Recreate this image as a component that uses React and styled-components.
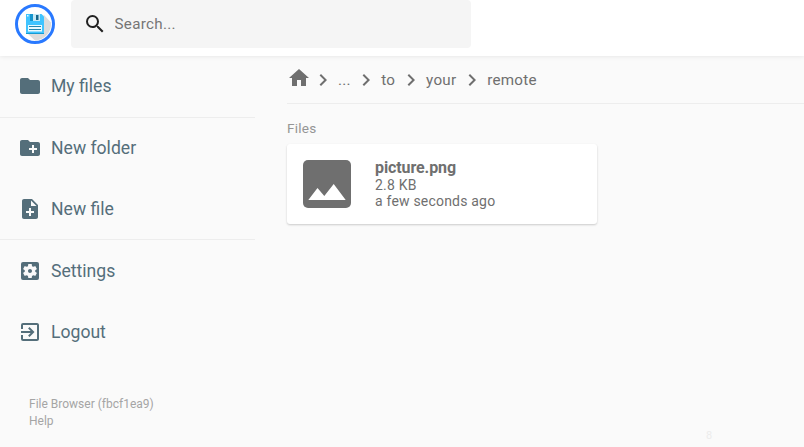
import React from "react";
import styled, { createGlobalStyle } from "styled-components";
import {
  MdSearch, MdHome, MdChevronRight, MdFolder, MdCreateNewFolder,
  MdNoteAdd, MdSettingsApplications, MdExitToApp,
} from "react-icons/md";

const GlobalStyle = createGlobalStyle`
  * { box-sizing: border-box; }
  body {
    margin: 0;
    background: #fafafa;
    color: #6f6f6f;
    font-family: Roboto, sans-serif;
    overflow: hidden;
  }
  svg { display: block; flex: none; }
`;

const Page = styled.div`
  height: 447px;
  display: flex;
  flex-direction: column;
  overflow: hidden;
`;

const Header = styled.header`
  height: 56px;
  flex: none;
  display: flex;
  align-items: flex-start;
  gap: 16px;
  padding-left: 15px;
  background: #fff;
  box-shadow: 0 0 5px rgba(0, 0, 0, 0.1);
  z-index: 1;
`;

const Logo = styled.svg`
  width: 40px;
  height: 40px;
  margin-top: 4px;
`;

const Search = styled.label`
  width: 400px;
  height: 48px;
  display: flex;
  align-items: center;
  gap: 7.5px;
  padding-left: 12px;
  border-radius: 4px;
  background: #f5f5f5;
  color: #212121;
`;

const SearchInput = styled.input`
  flex: 1;
  border: 0;
  outline: 0;
  padding: 0;
  background: transparent;
  font: 15.2px Roboto, sans-serif;
  letter-spacing: 0.3px;
  &::placeholder { color: #757575; }
`;

const Body = styled.div`
  flex: 1;
  display: flex;
`;

const Sidebar = styled.nav`
  width: 255px;
  margin-right: 32px;
`;

const Group = styled.div`
  & + & { border-top: 1px solid rgba(0, 0, 0, 0.05); }
`;

const Action = styled.a`
  height: 60.8px;
  display: flex;
  align-items: center;
  gap: 9.5px;
  padding-left: 17.5px;
  color: #546e7a;
  font-size: 17.6px;
`;

const Credits = styled.footer`
  padding: 34px 0 0 29px;
  color: #a5a5a5;
  font-size: 12px;
  line-height: 17px;
`;

const Main = styled.main`
  flex: 1;
`;

const Breadcrumbs = styled.div`
  height: 48px;
  display: flex;
  align-items: center;
  border-bottom: 1px solid rgba(0, 0, 0, 0.05);
  font-size: 15.2px;
  letter-spacing: 0.25px;
`;

const HomeIcon = styled(MdHome)`
  margin-bottom: 3px;
`;

const Crumb = styled.span`
  width: ${(p) => p.$width}px;
  text-align: center;
  white-space: nowrap;
`;

const SectionTitle = styled.h2`
  margin: 16px 0 8px;
  color: #959595;
  font-size: 13.6px;
  font-weight: 400;
  line-height: 16px;
  letter-spacing: 0.25px;
`;

const Card = styled.article`
  width: 310px;
  height: 80px;
  display: flex;
  align-items: center;
  gap: 24px;
  padding-left: 16px;
  border-radius: 3px;
  background: #fff;
  box-shadow: 0 1px 3px rgba(0, 0, 0, 0.06), 0 1px 2px rgba(0, 0, 0, 0.14);
`;

const FileName = styled.div`
  margin-bottom: 1px;
  font-size: 16px;
  font-weight: 700;
  line-height: 16px;
  letter-spacing: -0.1px;
`;

const FileMeta = styled.div`
  font-size: 14px;
  line-height: 16px;
  letter-spacing: 0.2px;
`;

const Watermark = styled.span`
  position: absolute;
  left: 706px;
  top: 429px;
  color: #ececec;
  font-size: 11px;
  line-height: 13px;
`;

const groups = [
  [["My files", MdFolder]],
  [["New folder", MdCreateNewFolder], ["New file", MdNoteAdd]],
  [["Settings", MdSettingsApplications], ["Logout", MdExitToApp]],
];

const crumbs = [["...", 19], ["to", 20.5], ["your", 37.5], ["remote", 56]];

function DiskLogo() {
  return (
    <Logo viewBox="0 0 40 40">
      <circle cx="20" cy="20" r="18.5" fill="#fff" />
      <path d="M29 11 36 18.5A16.5 16.5 0 0 1 20 36.5L12 29Z" fill="#dcdcdc" />
      <circle cx="20" cy="20" r="18.5" fill="none" stroke="#2979ff" strokeWidth="3" />
      <path d="M11 10h15.5l2.5 2.5V30H11Z" fill="#40c4ff" />
      <path d="M15 10h10v7H15Z" fill="#c7e9f5" />
      <path d="M15 10h3v7h-3Z" fill="#1596cf" />
      <path d="M21 11h2.5v5H21Z" fill="#17658a" />
      <path d="M12 11h1.5v1.5H12Z" fill="#e8f9ff" />
      <path d="M13 21h14v6.5H13Z" fill="#eafaff" />
      <path d="M14 22.5h12M14 25.5h12" stroke="#2486ae" />
      <path d="M11 29h18v1H11Z" fill="#159bd3" />
    </Logo>
  );
}

function PictureIcon() {
  return (
    <svg width="48" height="48" viewBox="0 0 48 48">
      <rect width="48" height="48" rx="5" fill="#6f6f6f" />
      <path d="M5.3 40 14.5 28 21.3 36 30.7 24 42.7 40Z" fill="#fff" />
    </svg>
  );
}

export default function App() {
  return (
    <Page>
      <GlobalStyle />
      <Header>
        <DiskLogo />
        <Search>
          <MdSearch size={24} />
          <SearchInput placeholder="Search..." />
        </Search>
      </Header>
      <Body>
        <Sidebar>
          {groups.map((items, i) => (
            <Group key={i}>
              {items.map(([label, Icon]) => (
                <Action key={label}><Icon size={24} />{label}</Action>
              ))}
            </Group>
          ))}
          <Credits>
            <div>File Browser (fbcf1ea9)</div>
            <div>Help</div>
          </Credits>
        </Sidebar>
        <Main>
          <Breadcrumbs>
            <HomeIcon size={24} />
            {crumbs.map(([name, width]) => (
              <React.Fragment key={name}>
                <MdChevronRight size={24} />
                <Crumb $width={width}>{name}</Crumb>
              </React.Fragment>
            ))}
          </Breadcrumbs>
          <SectionTitle>Files</SectionTitle>
          <Card>
            <PictureIcon />
            <div>
              <FileName>picture.png</FileName>
              <FileMeta>2.8 KB</FileMeta>
              <FileMeta>a few seconds ago</FileMeta>
            </div>
          </Card>
        </Main>
      </Body>
      <Watermark>8</Watermark>
    </Page>
  );
}
